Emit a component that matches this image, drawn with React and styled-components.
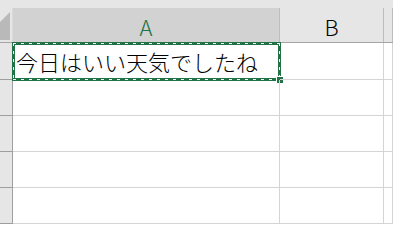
import React from "react";
import styled, { createGlobalStyle } from "styled-components";

const GlobalStyle = createGlobalStyle`
  html, body { margin: 0; padding: 0; background: #ffffff; }
  body { font-family: "Noto Sans CJK JP", "Noto Sans", sans-serif; overflow: hidden; }
`;

const COLS = "13px 267px 104px 1fr";

const Sheet = styled.div`
  width: 393px;
  height: 242px;
  overflow: hidden;
  background: #ffffff;
`;

const TopStrip = styled.div`
  height: 8px;
  background: #e6e6e6;
`;

const HeaderRow = styled.div`
  display: grid;
  grid-template-columns: ${COLS};
  height: 34px;
  border-bottom: 1px solid #a6a6a6;
  background: #e6e6e6;
`;

const Corner = styled.div`
  position: relative;
  background: #e6e6e6;
  border-right: 1px solid #dadada;
`;

const CornerMark = styled.svg`
  position: absolute;
  left: 0;
  top: 4px;
`;

const ColHead = styled.div`
  display: flex;
  align-items: center;
  justify-content: center;
  background: ${(p) => (p.$active ? "#d2d2d2" : "#e6e6e6")};
  border-right: 1px solid #bdbdbd;
  color: ${(p) => (p.$active ? "#217346" : "#000000")};
  font-family: "Noto Sans CJK JP", "Noto Sans", sans-serif;
  font-weight: 300;
  font-size: 22px;
  line-height: 1;
  padding-top: 1px;
`;

const Row = styled.div`
  display: grid;
  grid-template-columns: ${COLS};
  height: ${(p) => p.$h}px;
`;

const RowHead = styled.div`
  background: #e6e6e6;
  border-right: 1px solid #9f9f9f;
  border-bottom: 1px solid #9f9f9f;
`;

const Cell = styled.div`
  position: relative;
  display: flex;
  align-items: center;
  padding-left: 3px;
  border-right: 1px solid #d4d4d4;
  border-bottom: 1px solid #d4d4d4;
  font-family: "Noto Sans CJK JP", sans-serif;
  font-weight: 300;
  font-size: 22px;
  color: #000000;
  white-space: nowrap;
`;

/* copy-range frame: thick green border with white "marching ants" in its middle line */
const Selection = styled.div`
  position: absolute;
  left: -1px;
  top: -1px;
  right: -2px;
  bottom: -2px;
  border: 3px solid #217346;
  pointer-events: none;
`;

const dashH = "repeating-linear-gradient(90deg, #ffffff 0 3px, transparent 3px 8px)";
const dashV = "repeating-linear-gradient(180deg, #ffffff 0 3px, transparent 3px 8px)";

const Ants = styled.div`
  position: absolute;
  inset: -2px;
  background:
    ${dashH} top left / 100% 1px no-repeat,
    ${dashH} bottom left / 100% 1px no-repeat,
    ${dashV} top left / 1px 100% no-repeat,
    ${dashV} top right / 1px 100% no-repeat;
`;

const FillHandle = styled.div`
  position: absolute;
  right: -5px;
  bottom: -5px;
  width: 6px;
  height: 6px;
  background: #217346;
  border-left: 1px solid #ffffff;
  border-top: 1px solid #ffffff;
`;

const rows = [37, 36, 36, 36, 36];

export default function App() {
  return (
    <Sheet>
      <GlobalStyle />
      <TopStrip />
      <HeaderRow>
        <Corner>
          <CornerMark width="11" height="30" viewBox="0 0 11 30">
            <polygon points="10,0 10,28 0,28 0,10" fill="#b9b9b9" />
          </CornerMark>
        </Corner>
        <ColHead $active>A</ColHead>
        <ColHead>B</ColHead>
        <ColHead />
      </HeaderRow>
      {rows.map((h, i) => (
        <Row key={i} $h={h}>
          <RowHead />
          <Cell>
            {i === 0 && "今日はいい天気でしたね"}
            {i === 0 && (
              <Selection>
                <Ants />
                <FillHandle />
              </Selection>
            )}
          </Cell>
          <Cell />
          <Cell />
        </Row>
      ))}
    </Sheet>
  );
}
